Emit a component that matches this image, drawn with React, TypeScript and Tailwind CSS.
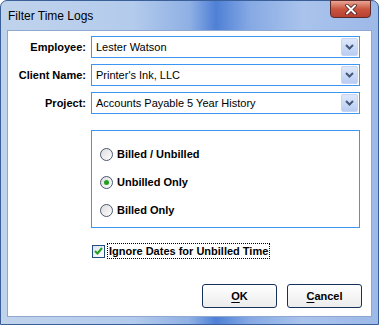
import React from 'react';

const font = { fontFamily: '"Liberation Sans", Arial, sans-serif' };

// Small chevron shown in the combo's drop button
const Chevron = () => (
  <svg width="9" height="6" viewBox="0 0 9 6">
    <path d="M1 1 L4.5 4.5 L8 1" fill="none" stroke="#45577a" strokeWidth="2" />
  </svg>
);

const Combo = ({ value }: { value: string }) => (
  <div className="h-[22px] w-[269px] flex items-center border border-[#3c97f2] bg-white pl-[4px] pr-[1px]">
    <span className="flex-1 text-[11px] text-black truncate">{value}</span>
    <div className="w-[17px] h-[18px] flex items-center justify-center rounded-[2px] bg-gradient-to-b from-[#dfe8fa] to-[#b9cdf2] border border-[#c5d5f3]">
      <Chevron />
    </div>
  </div>
);

const Radio = ({ label, checked = false }: { label: string; checked?: boolean }) => (
  <div className="h-[14px] flex items-center gap-[4px]">
    <div className="w-[13px] h-[13px] rounded-full border border-[#4a5870] bg-gradient-to-br from-[#dcdcdc] to-white flex items-center justify-center">
      {checked && <div className="w-[5px] h-[5px] rounded-full bg-[#20a020]" />}
    </div>
    <span className="text-[11px] font-bold text-black">{label}</span>
  </div>
);

const Button = ({ first, rest }: { first: string; rest: string }) => (
  <div className="w-[75px] h-[24px] rounded-[3px] border border-[#15305a] bg-gradient-to-b from-white to-[#ececec] flex items-center justify-center text-[11px] font-bold text-black">
    <span className="underline underline-offset-2">{first}</span>
    <span>{rest}</span>
  </div>
);

export default function App() {
  return (
    <div
      className="w-[379px] h-[325px] flex flex-col rounded-t-[7px] border border-[#3a5f99] bg-[linear-gradient(90deg,#c0d3ec_0%,#b3cbec_35%,#8fb0e4_50%,#4f80d6_57%,#86a9e4_66%,#a9c3ec_80%,#9db9e8_100%)]"
      style={font}
    >
      {/* Title bar */}
      <div className="h-[29px] flex items-start justify-between">
        <span className="pl-[7px] pt-[6px] text-[12px] text-black">Filter Time Logs</span>
        <div className="mr-[7px] mt-[-1px] w-[41px] h-[18px] rounded-b-[4px] border border-[#5b2a2a] bg-gradient-to-b from-[#e8a595] via-[#c9553f] to-[#b84030] flex items-center justify-center">
          <svg width="12" height="11" viewBox="0 0 12 11">
            <path d="M2 1.5 L10 9.5 M10 1.5 L2 9.5" stroke="#4a2020" strokeWidth="3.6" strokeLinecap="round" />
            <path d="M2 1.5 L10 9.5 M10 1.5 L2 9.5" stroke="white" strokeWidth="2" strokeLinecap="round" />
          </svg>
        </div>
      </div>

      {/* Client area */}
      <div className="flex-1 mx-[6px] mb-[7px] bg-white border border-[#8ea8d0] flex flex-col pt-[5px]">
        <div className="grid grid-cols-[83px_269px] gap-y-[6px] items-center">
          <span className="text-right pr-[5px] text-[11px] font-bold text-black">Employee:</span>
          <Combo value="Lester Watson" />
          <span className="text-right pr-[5px] text-[11px] font-bold text-black">Client Name:</span>
          <Combo value="Printer's Ink, LLC" />
          <span className="text-right pr-[5px] text-[11px] font-bold text-black">Project:</span>
          <Combo value="Accounts Payable 5 Year History" />
        </div>

        {/* Billing filter group */}
        <div className="ml-[83px] mt-[16px] w-[269px] h-[98px] border border-[#3c97f2] flex flex-col pl-[8px] pt-[16px] gap-[14px]">
          <Radio label="Billed / Unbilled" />
          <Radio label="Unbilled Only" checked />
          <Radio label="Billed Only" />
        </div>

        <div className="ml-[84px] mt-[15px] flex items-center">
          <div className="w-[13px] h-[13px] border border-[#1f4f80] bg-gradient-to-br from-[#dde5ee] to-white flex items-center justify-center">
            <svg width="9" height="8" viewBox="0 0 9 8">
              <path d="M1 4 L3.5 6.5 L8 1" fill="none" stroke="#22a022" strokeWidth="2" />
            </svg>
          </div>
          <span className="ml-[2px] px-[1px] h-[16px] flex items-center border border-dotted border-black text-[11px] font-bold text-black">
            Ignore Dates for Unbilled Time
          </span>
        </div>

        <div className="mt-[25px] ml-auto mr-[9px] flex gap-[10px]">
          <Button first="O" rest="K" />
          <Button first="C" rest="ancel" />
        </div>
      </div>
    </div>
  );
}
